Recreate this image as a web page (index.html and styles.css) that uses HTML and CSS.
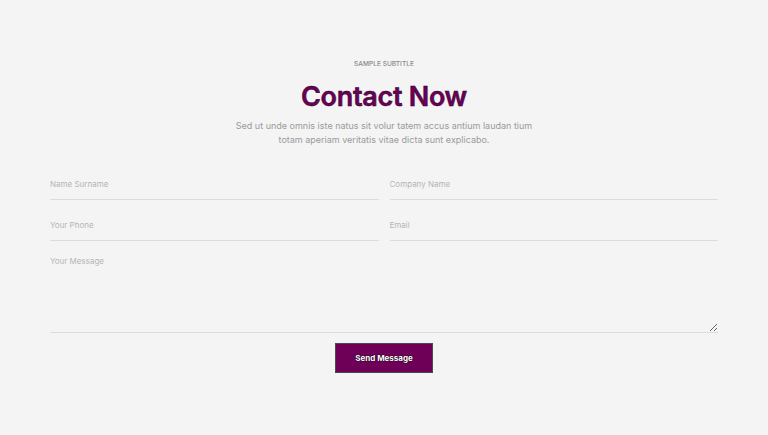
FILE: index.html
```html
<!DOCTYPE html>
<html>
<head>
<meta charset="utf-8">
<link rel="stylesheet" href="styles.css">
</head>
<body>
<section class="contact">
  <div class="head">
    <div class="subtitle">SAMPLE SUBTITLE</div>
    <h1 class="title">Contact Now</h1>
    <p class="lead">Sed ut unde omnis iste natus sit volur tatem accus antium laudan tium<br>totam aperiam veritatis vitae dicta sunt explicabo.</p>
  </div>
  <form class="form">
    <div class="grid">
      <input class="field" type="text" placeholder="Name Surname">
      <input class="field" type="text" placeholder="Company Name">
      <input class="field" type="text" placeholder="Your Phone">
      <input class="field" type="text" placeholder="Email">
    </div>
    <textarea class="message" placeholder="Your Message"></textarea>
    <div class="actions">
      <button class="send" type="button">Send Message</button>
    </div>
  </form>
</section>
</body>
</html>
```
FILE: styles.css
```css
html, body {
  margin: 0;
  padding: 0;
  background: #f4f4f4;
}
body {
  font-family: Inter, "Noto Sans", sans-serif;
  width: 768px;
  height: 435px;
  overflow: hidden;
}
.contact {
  padding: 60px 50px 0 50px;
}
.head {
  display: flex;
  flex-direction: column;
  align-items: center;
  text-align: center;
}
.subtitle {
  font-size: 6.6px;
  font-weight: 500;
  color: #8a8a8a;
  line-height: 9px;
}
.title {
  margin: 11px 0 0 0;
  font-size: 27px;
  line-height: 33px;
  font-weight: 600;
  color: #6c0058;
  -webkit-text-stroke: 0.5px #2a0024;
  letter-spacing: -0.3px;
}
.lead {
  margin: 6px 0 0 0;
  font-size: 9px;
  line-height: 14px;
  color: #9a9a9a;
}
.form {
  margin-top: 21px;
  display: flex;
  flex-direction: column;
}
.grid {
  display: grid;
  grid-template-columns: 1fr 1fr;
  column-gap: 11px;
  row-gap: 9px;
}
.field, .message {
  font-family: Inter, "Noto Sans", sans-serif;
  font-size: 8px;
  color: #555;
  background: transparent;
  border: none;
  border-bottom: 1px solid #dcdcdc;
  outline: none;
  padding: 0;
  margin: 0;
  box-sizing: border-box;
}
.field {
  height: 32px;
  width: 100%;
}
.field::placeholder, .message::placeholder {
  color: #b4b4b4;
}
.message {
  margin-top: 9px;
  height: 83px;
  padding-top: 6px;
  width: 668px;
  display: block;
}
.actions {
  display: flex;
  justify-content: center;
  margin-top: 10px;
}
.send {
  width: 98px;
  height: 30px;
  background: #6e0058;
  border: 1px solid #4a4a4a;
  color: #fff;
  font-family: Inter, "Noto Sans", sans-serif;
  font-size: 8px;
  font-weight: 700;
  text-shadow: 0 0 1px #000, 0 0 1px #000;
  padding: 0;
}
```
